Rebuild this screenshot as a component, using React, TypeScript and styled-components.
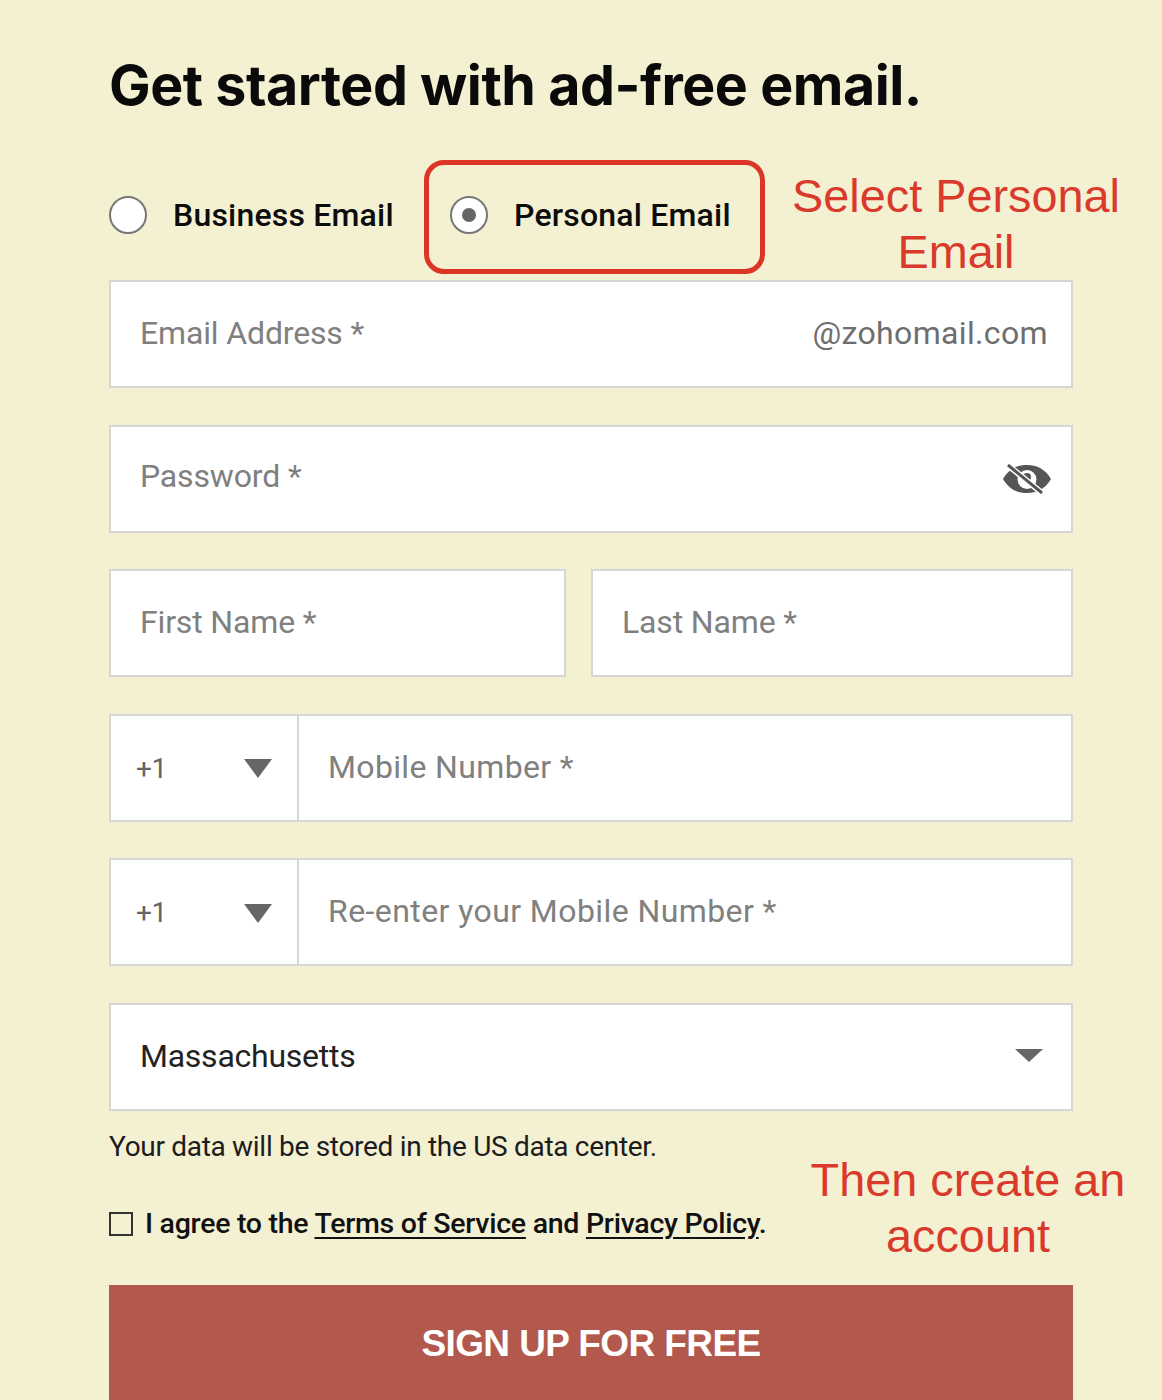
import React from "react";
import styled, { createGlobalStyle } from "styled-components";

const Global = createGlobalStyle`
  html, body { margin: 0; padding: 0; background: #f4f0d2; }
  body { font-family: Roboto, "Liberation Sans", sans-serif; }
`;

const Page = styled.div`
  position: relative;
  width: 1162px;
  height: 1400px;
  overflow: hidden;
  box-sizing: border-box;
  padding: 50px 89px 0 109px;
  background: #f4f0d2;
`;

const Heading = styled.h1`
  margin: 0;
  height: 70px;
  font: 700 55.5px/70px Inter, sans-serif;
  letter-spacing: -0.47px;
  color: #0a0a0a;
  white-space: nowrap;
`;

const RadioRow = styled.div`
  display: flex;
  align-items: center;
  height: 122px;
  margin-top: 38px;
  padding-bottom: 8px;
  box-sizing: border-box;
`;

const RadioOption = styled.label<{ $width: number }>`
  display: flex;
  align-items: center;
  gap: 26px;
  width: ${(p) => p.$width}px;
  font: 500 32px/40px Roboto, sans-serif;
  letter-spacing: 0.2px;
  color: #0c0c0c;
  white-space: nowrap;
`;

const RadioCircle = styled.span<{ $checked?: boolean }>`
  flex: none;
  width: 38px;
  height: 38px;
  box-sizing: border-box;
  border: 2px solid #767676;
  border-radius: 50%;
  background: #fff;
  display: flex;
  align-items: center;
  justify-content: center;
  &::after {
    content: "";
    display: ${(p) => (p.$checked ? "block" : "none")};
    width: 14px;
    height: 14px;
    border-radius: 50%;
    background: #666;
  }
`;

const Highlight = styled.div`
  position: absolute;
  left: 424px;
  top: 160px;
  width: 341px;
  height: 114px;
  box-sizing: border-box;
  border: 5px solid #dc3425;
  border-radius: 20px;
`;

const Note = styled.div<{ $left: number; $top: number; $width: number }>`
  position: absolute;
  left: ${(p) => p.$left}px;
  top: ${(p) => p.$top}px;
  width: ${(p) => p.$width}px;
  text-align: center;
  font: 400 46.8px/56px "Liberation Sans", Arial, sans-serif;
  color: #d93a2b;
`;

const Fields = styled.div`
  display: flex;
  flex-direction: column;
  gap: 36.6px;
`;

const Row = styled.div`
  display: flex;
  gap: 25px;
`;

const Field = styled.div<{ $width?: number }>`
  flex: ${(p) => (p.$width ? `0 0 ${p.$width}px` : "1 1 auto")};
  display: flex;
  align-items: center;
  justify-content: space-between;
  height: 108px;
  box-sizing: border-box;
  padding: 0 23px 2px 29px;
  border: 2px solid #d6d6d6;
  background: #fff;
  min-width: 0;
`;

const Placeholder = styled.span<{ $tracking?: number; $lift?: number }>`
  margin-bottom: ${(p) => p.$lift ?? 0}px;
  font: 400 32px/40px Roboto, sans-serif;
  letter-spacing: ${(p) => p.$tracking ?? -0.15}px;
  color: #80807f;
  white-space: nowrap;
`;

const Domain = styled.span`
  font: 400 32px/40px Roboto, sans-serif;
  letter-spacing: 0.35px;
  color: #6e6e6e;
`;

const Value = styled.span`
  font: 400 32px/40px Roboto, sans-serif;
  letter-spacing: -0.25px;
  color: #222;
`;

const PhoneField = styled.div`
  display: flex;
  height: 108px;
  box-sizing: border-box;
  border: 2px solid #d6d6d6;
  background: #fff;
`;

const CodeBox = styled.div`
  flex: 0 0 188px;
  box-sizing: border-box;
  display: flex;
  align-items: center;
  justify-content: space-between;
  padding: 2px 25px 0 25px;
  border-right: 2px solid #d6d6d6;
  font: 400 28px/40px Roboto, sans-serif;
  letter-spacing: -0.4px;
  color: #666;
`;

const PhoneInput = styled.div`
  flex: 1;
  display: flex;
  align-items: center;
  padding: 0 0 2px 29px;
`;

const Arrow = styled.span<{ $w: number; $h: number; $inset?: number }>`
  width: 0;
  height: 0;
  margin-right: ${(p) => p.$inset ?? 0}px;
  border-left: ${(p) => p.$w / 2}px solid transparent;
  border-right: ${(p) => p.$w / 2}px solid transparent;
  border-top: ${(p) => p.$h}px solid #666;
`;

const Notice = styled.p`
  margin: 18px 0 0;
  font: 400 28px/36px Roboto, sans-serif;
  letter-spacing: -0.3px;
  color: #1c1c1c;
`;

const Agree = styled.label`
  display: flex;
  align-items: center;
  gap: 12px;
  margin-top: 40px;
  font: 500 28.5px/38px Roboto, sans-serif;
  letter-spacing: -0.27px;
  color: #111;
  white-space: nowrap;
`;

const Check = styled.span`
  width: 24px;
  height: 24px;
  box-sizing: border-box;
  border: 2px solid #333;
  background: transparent;
`;

const TextLink = styled.a`
  color: #111;
  text-decoration: underline;
  text-underline-offset: 4px;
`;

const Submit = styled.button`
  display: block;
  width: 964px;
  height: 130px;
  margin-top: 42px;
  padding: 0 0 12px;
  border: 0;
  background: #b2584c;
  color: #fff;
  font: 700 37px/44px "Liberation Sans", Arial, sans-serif;
  letter-spacing: -0.6px;
`;

const EyeIcon = styled.svg`
  flex: none;
  margin-right: -3px;
  margin-top: 2px;
`;

const EyeOff = () => (
  <EyeIcon width="48" height="30" viewBox="0 0 48 30" aria-hidden="true">
    <path fillRule="evenodd" fill="#555" d="M0 15C6 5 14 1 24 1s18 4 24 14c-6 10-14 14-24 14S6 25 0 15Zm24-9a9.500 9.500 0 1 0 0 19 9.500 9.500 0 0 0 0-19Z" />
    <circle cx="24" cy="13" r="4" fill="#555" />
    <path d="M7 3 39 29" stroke="#fff" strokeWidth="6" />
    <path d="M5 1 39 29" stroke="#555" strokeWidth="3" />
  </EyeIcon>
);

const App = () => (
  <Page>
    <Global />
    <Heading>Get started with ad-free email.</Heading>
    <RadioRow>
      <RadioOption $width={341}>
        <RadioCircle />
        Business Email
      </RadioOption>
      <RadioOption $width={320}>
        <RadioCircle $checked />
        Personal Email
      </RadioOption>
    </RadioRow>
    <Fields>
      <Field>
        <Placeholder>Email Address *</Placeholder>
        <Domain>@zohomail.com</Domain>
      </Field>
      <Field>
        <Placeholder $lift={4}>Password *</Placeholder>
        <EyeOff />
      </Field>
      <Row>
        <Field $width={457}>
          <Placeholder>First Name *</Placeholder>
        </Field>
        <Field>
          <Placeholder>Last Name *</Placeholder>
        </Field>
      </Row>
      <PhoneField>
        <CodeBox>
          +1
          <Arrow $w={29} $h={19} />
        </CodeBox>
        <PhoneInput>
          <Placeholder $tracking={0.35}>Mobile Number *</Placeholder>
        </PhoneInput>
      </PhoneField>
      <PhoneField>
        <CodeBox>
          +1
          <Arrow $w={29} $h={19} />
        </CodeBox>
        <PhoneInput>
          <Placeholder $tracking={0.42}>Re-enter your Mobile Number *</Placeholder>
        </PhoneInput>
      </PhoneField>
      <Field>
        <Value>Massachusetts</Value>
        <Arrow $w={29} $h={13} $inset={5} />
      </Field>
    </Fields>
    <Notice>Your data will be stored in the US data center.</Notice>
    <Agree>
      <Check />
      <span>
        I agree to the <TextLink>Terms of Service</TextLink> and <TextLink>Privacy Policy</TextLink>.
      </span>
    </Agree>
    <Submit>SIGN UP FOR FREE</Submit>
    <Highlight />
    <Note $left={776} $top={168} $width={360}>
      Select Personal
      <br />
      Email
    </Note>
    <Note $left={788} $top={1152} $width={360}>
      Then create an
      <br />
      account
    </Note>
  </Page>
);

export default App;
